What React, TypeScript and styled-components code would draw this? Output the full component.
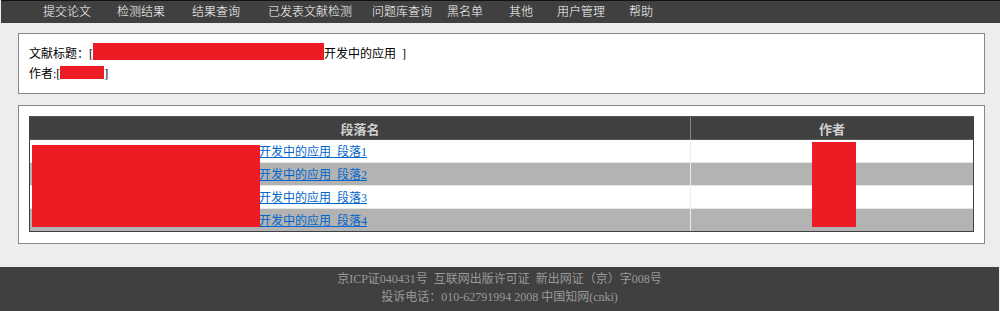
import React from 'react';
import styled, { createGlobalStyle } from 'styled-components';

const GlobalStyle = createGlobalStyle`
  *, *::before, *::after {
    box-sizing: border-box;
  }
  html, body {
    margin: 0;
    padding: 0;
    background: #ededed;
  }
  body {
    font-family: "Liberation Serif", "Noto Sans CJK SC", serif;
    font-size: 12px;
    color: #000;
  }
`;

const menu = [
  { label: '提交论文', w: 74 },
  { label: '检测结果', w: 75 },
  { label: '结果查询', w: 76 },
  { label: '已发表文献检测', w: 104 },
  { label: '问题库查询', w: 75 },
  { label: '黑名单', w: 62 },
  { label: '其他', w: 48 },
  { label: '用户管理', w: 72 },
  { label: '帮助', w: 60 },
];

const rows = [1, 2, 3, 4];

export default function App() {
  return (
    <>
      <GlobalStyle />
      <Page>
        <NavBar>
          {menu.map((m) => (
            <NavItem key={m.label} $w={m.w} href="#">
              {m.label}
            </NavItem>
          ))}
        </NavBar>

        <InfoBox>
          <InfoLine>
            文献标题：[<Redacted $w={231} $h={17} $shift={-1} />开发中的应用&nbsp;&nbsp;]
          </InfoLine>
          <InfoLine>
            作者:[<Redacted $w={44} $h={13} $shift={2} />]
          </InfoLine>
        </InfoBox>

        <TableBox>
          <TableWrap>
            <ParaTable>
              <thead>
                <tr>
                  <HeadCell $main>段落名</HeadCell>
                  <HeadCell>作者</HeadCell>
                </tr>
              </thead>
              <tbody>
                {rows.map((n) => (
                  <Row key={n} $alt={n % 2 === 0}>
                    <NameCell $first={n === 1}>
                      <ParaLink href="#">
                        <Hidden />
                        开发中的应用_段落{n}
                      </ParaLink>
                    </NameCell>
                    <AuthorCell $first={n === 1} />
                  </Row>
                ))}
              </tbody>
            </ParaTable>
            <Cover $x={3} $y={29} $w={228} $h={82} />
            <Cover $x={783} $y={26} $w={44} $h={85} />
          </TableWrap>
        </TableBox>

        <Footer>
          <div>京ICP证040431号&nbsp;&nbsp;互联网出版许可证&nbsp;&nbsp;新出网证（京）字008号</div>
          <div>投诉电话：010-62791994 2008 中国知网(cnki)</div>
        </Footer>
      </Page>
    </>
  );
}

const Page = styled.div`
  width: 1000px;
  height: 311px;
  display: flex;
  flex-direction: column;
`;

const NavBar = styled.div`
  display: flex;
  flex: none;
  height: 23px;
  margin-left: 1px;
  padding-left: 42px;
  border-top: 1px solid #111;
  background: #404040;
`;

const NavItem = styled.a<{ $w: number }>`
  width: ${(p) => p.$w}px;
  flex: none;
  line-height: 22px;
  color: #fff;
  font-size: 12px;
  font-weight: 300;
  text-decoration: none;
  white-space: nowrap;
`;

const Panel = styled.div`
  flex: none;
  margin-left: 18px;
  width: 967px;
  background: #fff;
  border: 1px solid #888;
`;

const InfoBox = styled(Panel)`
  margin-top: 10px;
  padding: 10px 10px 9px;
`;

const InfoLine = styled.div`
  line-height: 20px;
  height: 20px;
  white-space: nowrap;
`;

const Redacted = styled.span<{ $w: number; $h: number; $shift: number }>`
  display: inline-block;
  vertical-align: top;
  width: ${(p) => p.$w}px;
  height: ${(p) => p.$h}px;
  margin-top: ${(p) => p.$shift}px;
  background: #ed1c24;
`;

const TableBox = styled(Panel)`
  margin-top: 11px;
  padding: 10px 10px 11px;
`;

const TableWrap = styled.div`
  position: relative;
`;

const ParaTable = styled.table`
  width: 100%;
  table-layout: fixed;
  border-collapse: separate;
  border-spacing: 0;
  border: 1px solid #404040;
  border-top-color: #555;
`;

const HeadCell = styled.th<{ $main?: boolean }>`
  width: ${(p) => (p.$main ? '661px' : 'auto')};
  height: 23px;
  padding: 0;
  background: #404040;
  color: #d0d0d0;
  font-size: 13px;
  font-weight: bold;
  text-align: center;
  border-bottom: 1px solid #5a5a5a;
  border-right: ${(p) => (p.$main ? '1px solid #888' : 'none')};
`;

const Row = styled.tr<{ $alt: boolean }>`
  background: ${(p) => (p.$alt ? '#b3b3b3' : '#fff')};
`;

const Cell = styled.td<{ $first: boolean }>`
  height: ${(p) => (p.$first ? '22px' : '23px')};
  padding: 0;
  border-top: ${(p) => (p.$first ? 'none' : '1px solid #e6e6e6')};
`;

const NameCell = styled(Cell)`
  padding-left: 1px;
  border-right: 1px solid #ececec;
  white-space: nowrap;
  overflow: hidden;
`;

const AuthorCell = styled(Cell)``;

const ParaLink = styled.a`
  color: #0066cc;
  font-size: 12px;
  text-decoration: underline;
`;

const Hidden = styled.span`
  display: inline-block;
  width: 228px;
  height: 12px;
`;

const Cover = styled.div<{ $x: number; $y: number; $w: number; $h: number }>`
  position: absolute;
  left: ${(p) => p.$x}px;
  top: ${(p) => p.$y}px;
  width: ${(p) => p.$w}px;
  height: ${(p) => p.$h}px;
  background: #ed1c24;
`;

const Footer = styled.div`
  margin: 23px 1px 0 0;
  flex: 1;
  padding-top: 3px;
  background: #404040;
  color: #999;
  font-size: 12px;
  line-height: 18px;
  text-align: center;
`;
